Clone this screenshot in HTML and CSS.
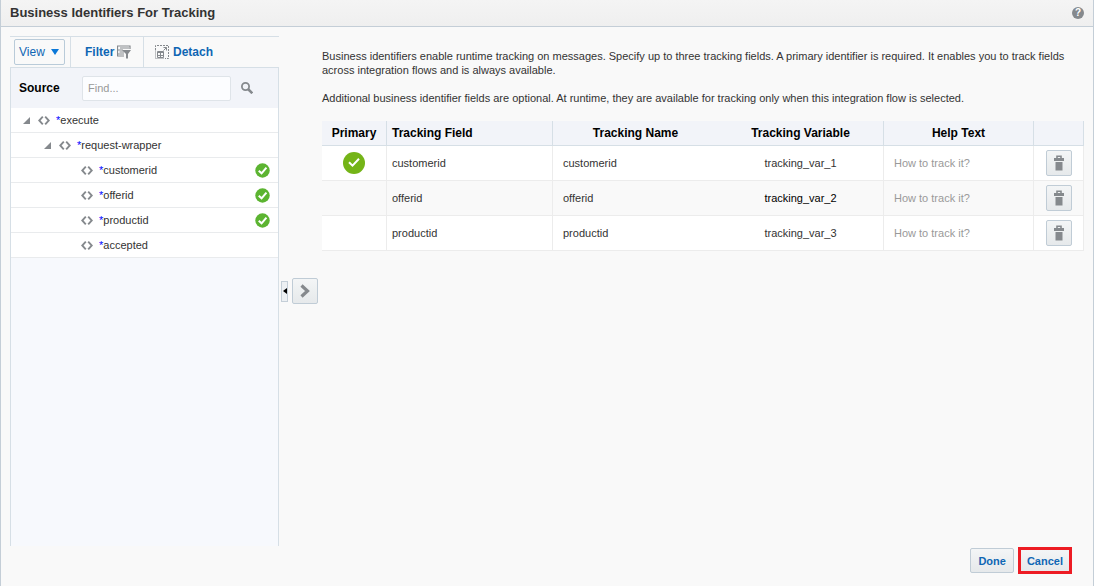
FILE: index.html
```html
<!DOCTYPE html>
<html lang="en">
<head>
<meta charset="utf-8">
<title>Business Identifiers For Tracking</title>
<link rel="stylesheet" href="styles.css">
</head>
<body>
<svg class="defs" aria-hidden="true">
  <symbol id="i-code" viewBox="0 0 12 9"><path d="M4.800 .7 1.200 4.500l3.600 3.800M7.200 .7 10.800 4.500 7.200 8.300" fill="none" stroke="#85898d" stroke-width="1.900"/></symbol>
  <symbol id="i-open" viewBox="0 0 8 8"><path d="M8 0v8H0z" fill="#85898d"/></symbol>
  <symbol id="i-check" viewBox="0 0 16 16"><circle cx="8" cy="8" r="7.700" fill="#5cb431"/><path d="M4 8.300 7 11 12.200 5" fill="none" stroke="#fff" stroke-width="2.200"/></symbol>
  <symbol id="i-primary" viewBox="0 0 22 22"><circle cx="11" cy="11" r="11" fill="#74b417"/><path d="M6 10.300 9.500 13.700 16 6.800" fill="none" stroke="#fff" stroke-width="2"/></symbol>
  <symbol id="i-trash" viewBox="0 0 12 16"><path d="M4 3V1.300h4V3" fill="none" stroke="#85898d" stroke-width="1.600"/><path d="M1 3h10v3H1zM2.500 7h7v8.500h-7z" fill="#85898d"/></symbol>
</svg>
<div class="dialog">
  <header class="titlebar">
    <h1>Business Identifiers For Tracking</h1>
    <button class="help" aria-label="Help">?</button>
  </header>
  <main class="body">
    <section class="source">
      <div class="toolbar">
        <div class="tool tool-view"><button class="view">View <svg width="8" height="6" viewBox="0 0 8 6"><path d="M0 0h8L4 6z" fill="#0b78d8"/></svg></button></div>
        <button class="tool tool-filter">Filter
          <svg width="14" height="14" viewBox="0 0 14 14"><path d="M.5 11V1h12.500v3M3 3h9M0 5h6M2.500 7H7M0 9h7M0 11h7" fill="none" stroke="#85898d" stroke-width="1.200"/><path d="M5 5h9l-3 4v4.500H9V9z" fill="#85898d"/></svg>
        </button>
        <button class="tool tool-detach">
          <svg width="14" height="14" viewBox="0 0 14 14"><path d="M.5 5V.5H13.500V13.500H10" fill="none" stroke="#85898d" stroke-dasharray="2 1"/><path d="M.5 5.500v8H9" fill="none" stroke="#85898d" stroke-dasharray="1 1"/><path d="M2.500 6.500h6v6h-6zM8.500 5.500l3-3M8.500 2.500h3v3" fill="none" stroke="#85898d"/><path d="M2 7.500h7M2 10.500h6M5.500 7v5" stroke="#85898d"/></svg>
          Detach
        </button>
      </div>
      <div class="panel">
        <div class="search">
          <label for="find">Source</label>
          <input id="find" type="text" placeholder="Find...">
          <button class="find-btn" aria-label="Search"><svg width="12" height="12" viewBox="0 0 12 12"><circle cx="4.500" cy="4.500" r="3.600" fill="none" stroke="#85898d" stroke-width="1.800"/><path d="M7 7l4.300 4.300" stroke="#85898d" stroke-width="2.500"/></svg></button>
        </div>
        <ul class="tree">
          <li class="level-1"><svg class="open"><use href="#i-open"/></svg><svg class="code"><use href="#i-code"/></svg><span><b>*</b>execute</span></li>
          <li class="level-2"><svg class="open"><use href="#i-open"/></svg><svg class="code"><use href="#i-code"/></svg><span><b>*</b>request-wrapper</span></li>
          <li class="level-3"><svg class="code"><use href="#i-code"/></svg><span><b>*</b>customerid</span><svg class="check"><use href="#i-check"/></svg></li>
          <li class="level-3"><svg class="code"><use href="#i-code"/></svg><span><b>*</b>offerid</span><svg class="check"><use href="#i-check"/></svg></li>
          <li class="level-3"><svg class="code"><use href="#i-code"/></svg><span><b>*</b>productid</span><svg class="check"><use href="#i-check"/></svg></li>
          <li class="level-3"><svg class="code"><use href="#i-code"/></svg><span><b>*</b>accepted</span></li>
        </ul>
      </div>
    </section>
    <div class="shuttle">
      <button class="collapse" aria-label="Collapse source"><svg width="4" height="6" viewBox="0 0 4 6"><path d="M4 0v6L0 3z"/></svg></button>
      <button class="icon-btn" aria-label="Add field"><svg width="10" height="14" viewBox="0 0 10 14"><path d="M1.500 1.500 7.500 7l-6 5.500" fill="none" stroke="#85898d" stroke-width="3.200"/></svg></button>
    </div>
    <section class="content">
      <p>Business identifiers enable runtime tracking on messages. Specify up to three tracking fields. A primary identifier is required. It enables you to track fields across integration flows and is always available.</p>
      <p>Additional business identifier fields are optional. At runtime, they are available for tracking only when this integration flow is selected.</p>
      <table class="fields">
        <colgroup><col class="c-primary"><col class="c-field"><col><col class="c-var"><col class="c-help"><col class="c-action"></colgroup>
        <thead>
          <tr><th>Primary</th><th class="left">Tracking Field</th><th class="open-side">Tracking Name</th><th>Tracking Variable</th><th>Help Text</th><th aria-label="Actions"></th></tr>
        </thead>
        <tbody>
          <tr><td class="mid"><svg class="primary"><use href="#i-primary"/></svg></td><td>customerid</td><td class="name">customerid</td><td class="mid">tracking_var_1</td><td><input type="text" aria-label="Help text 1" placeholder="How to track it?"></td><td class="mid"><button class="icon-btn" aria-label="Delete"><svg width="12" height="16"><use href="#i-trash"/></svg></button></td></tr>
          <tr><td></td><td>offerid</td><td class="name">offerid</td><td class="mid strong">tracking_var_2</td><td><input type="text" aria-label="Help text 2" placeholder="How to track it?"></td><td class="mid"><button class="icon-btn" aria-label="Delete"><svg width="12" height="16"><use href="#i-trash"/></svg></button></td></tr>
          <tr><td></td><td>productid</td><td class="name">productid</td><td class="mid">tracking_var_3</td><td><input type="text" aria-label="Help text 3" placeholder="How to track it?"></td><td class="mid"><button class="icon-btn" aria-label="Delete"><svg width="12" height="16"><use href="#i-trash"/></svg></button></td></tr>
        </tbody>
      </table>
    </section>
  </main>
  <footer class="actions">
    <button class="action">Done</button>
    <button class="action marked">Cancel</button>
  </footer>
</div>
</body>
</html>
```
FILE: styles.css
```css
* { box-sizing: border-box; }
body { margin: 0; background: #f9f9f9; color: #333; font: 11px/14px "Liberation Sans", Arial, sans-serif; }
button, input { font: inherit; color: inherit; margin: 0; padding: 0; }
button { background: none; border: 0; cursor: pointer; }
svg { display: block; flex: none; }
.defs { position: absolute; width: 0; height: 0; }

.dialog { min-height: 100vh; display: flex; flex-direction: column; border: solid #c4ced7; border-width: 0 1px; }
.titlebar { display: flex; align-items: center; justify-content: space-between; height: 27px; padding: 0 9px; background: linear-gradient(#f4f4f4, #efefef); border-bottom: 1px solid #c4ced7; }
.titlebar h1 { margin: 0; font-size: 13px; line-height: 26px; color: #333; }
.help { width: 12px; height: 12px; border-radius: 50%; background: #85898d; color: #fff; font-size: 10px; line-height: 12px; font-weight: bold; }

.body { flex: 1; display: flex; padding: 9px 9px 0; }
.source { width: 269px; flex: none; display: flex; flex-direction: column; }
.toolbar { display: flex; height: 31px; border-top: 1px solid #d6dfe6; font-size: 12px; }
.tool { display: flex; align-items: center; gap: 3px; border-right: 1px solid #d6dfe6; font-weight: bold; color: #0f66b4; }
.tool-view { width: 61px; padding-left: 4px; }
.tool-filter { width: 73px; padding-left: 14px; }
.tool-detach { gap: 4px; border: 0; padding-left: 11px; }
.view { display: flex; align-items: center; gap: 6px; height: 26px; width: 51px; padding-left: 4px; border: 1px solid #b9cbd9; border-radius: 2px; font-weight: normal; color: #0f66b4; }
.panel { flex: 1; background: #f7f9fd; border: solid #d6dfe6; border-width: 1px 1px 0; }
.search { display: flex; align-items: center; height: 40px; padding-left: 8px; background: #f2f4f9; }
.search label { width: 63px; font-size: 12px; font-weight: bold; color: #000; }
.search input { width: 149px; height: 25px; padding: 0 5px; border: 1px solid #dfe4e9; border-radius: 2px; background: #fcfdff; }
input::placeholder { color: #999; opacity: 1; }
.find-btn { margin-left: 10px; }
.tree { margin: 0; padding: 0; list-style: none; background: #fff; }
.tree li { display: flex; align-items: center; height: 25px; padding-right: 8px; border-bottom: 1px solid #e9ebed; }
.tree b { color: #00f; font-weight: normal; }
.level-1 { padding-left: 12px; }
.level-2 { padding-left: 33px; }
.level-3 { padding-left: 70px; }
.open { width: 7px; height: 7px; margin-right: 8px; }
.code { width: 12px; height: 9px; margin-right: 6px; }
.check { width: 15px; height: 15px; margin-left: auto; }

.shuttle { display: flex; align-items: center; gap: 4px; width: 43px; flex: none; padding-left: 2px; }
.collapse { display: grid; place-items: center; width: 7px; height: 21px; border: 1px solid #c4ced7; background: #edf0f3; }
.icon-btn { display: inline-grid; place-items: center; width: 26px; height: 26px; vertical-align: middle; border: 1px solid #c0ccd6; border-radius: 2px; background: linear-gradient(#f3f5f6, #e6e9eb); }

.content { flex: 1; min-width: 0; padding-top: 13px; }
.content p { margin: 0 0 14px; }
.fields { width: 100%; margin-top: 16px; table-layout: fixed; border-spacing: 0; }
.c-primary { width: 65px; }
.c-field, .c-var { width: 166px; }
.c-help { width: 150px; }
.c-action { width: 50px; }
.fields th { height: 25px; padding: 0; font-size: 12px; color: #000; background: #f2f4f9; border: solid #d6dfe6; border-width: 0 1px 1px 0; }
.fields td { height: 35px; padding: 0 5px; border: solid #ececec; border-width: 0 1px 1px 0; }
.fields tbody tr:nth-child(odd) { background: #fff; }
.fields .left { text-align: left; padding-left: 5px; }
.fields .open-side, .fields .name { border-right: 0; }
.fields .name { padding-left: 10px; }
.fields .mid { text-align: center; padding: 0; }
.fields .strong { color: #000; }
.fields input { width: 100%; padding-left: 5px; border: 0; background: none; }
.primary { width: 22px; height: 22px; margin: 0 auto; }

.actions { display: flex; align-items: center; justify-content: flex-end; gap: 4px; padding: 1px 21px 12px; }
.action { height: 25px; padding: 0 7px; font-weight: bold; color: #0f66b4; border: 1px solid #c0ccd6; border-radius: 2px; background: linear-gradient(#f3f5f6, #e6e9eb); }
.marked { height: 27px; padding: 0 6px; border: 3px solid #ed1c24; border-radius: 0; }
```
